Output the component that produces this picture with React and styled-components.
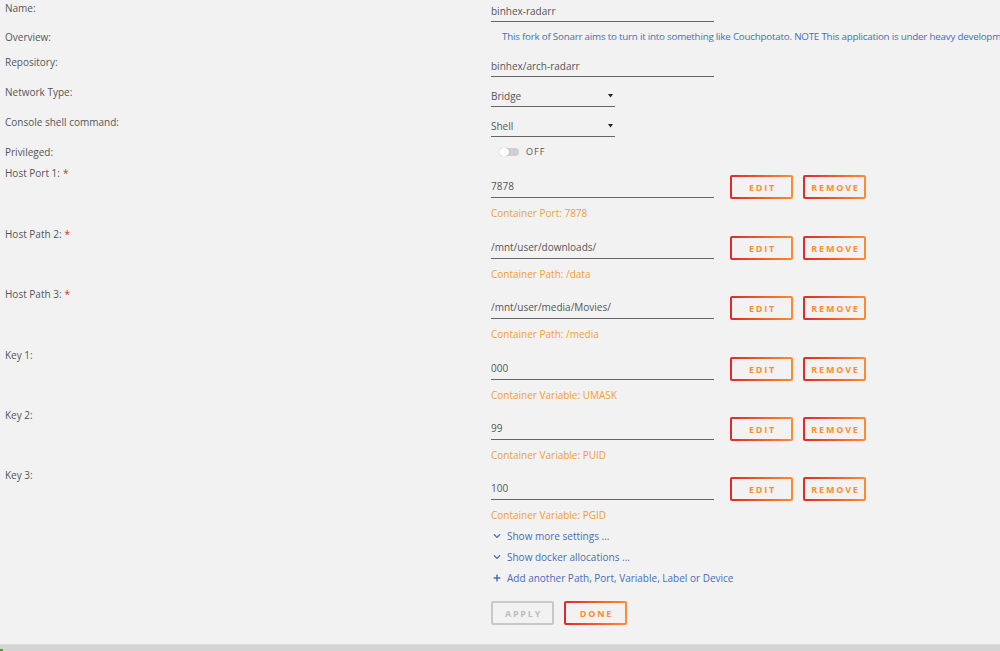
import React from 'react';
import styled, { createGlobalStyle } from 'styled-components';
import { FaChevronDown, FaPlus } from 'react-icons/fa';

const Global = createGlobalStyle`
  html, body { margin: 0; padding: 0; background: #f2f2f2; }
  body {
    font-family: "Open Sans", "DejaVu Sans", sans-serif;
    font-size: 10px;
    color: #555;
    overflow: hidden;
  }
  * { box-sizing: border-box; }
`;

const Page = styled.div`
  height: 651px;
  display: flex;
  flex-direction: column;
`;

const Form = styled.div`
  display: flex;
  flex-direction: column;
`;

const Row = styled.div`
  display: grid;
  grid-template-columns: 486px 1fr;
  padding-left: 5px;
  height: ${(p) => p.$h}px;
`;

const Label = styled.div`
  line-height: 16px;
  white-space: nowrap;
`;

const Req = styled.span`
  color: #e22828;
  margin-left: 3px;
`;

const Field = styled.div`
  margin-top: ${(p) => p.$mt || 0}px;
  display: flex;
  flex-direction: column;
  min-width: 0;
`;

const Input = styled.input`
  width: 223px;
  height: ${(p) => p.$h || 22}px;
  border: none;
  border-bottom: 1px solid #666;
  background: transparent;
  font: inherit;
  color: #555;
  padding: 0;
  outline: none;
`;

const Select = styled.div`
  width: 124px;
  height: 22px;
  border-bottom: 1px solid #666;
  display: flex;
  align-items: center;
  justify-content: space-between;
  padding-right: 2px;
`;

const Caret = styled.svg`
  width: 5px;
  height: 5px;
  fill: #222;
`;

const Description = styled.div`
  line-height: 16px;
  color: #486dba;
  margin-left: 11px;
  white-space: nowrap;
  font-size: 9.8px;
  letter-spacing: -0.22px;
`;

const ToggleWrap = styled.div`
  display: flex;
  align-items: center;
  height: 15px;
  margin-left: 8px;
  gap: 7px;
`;

const Track = styled.div`
  width: 20px;
  height: 8px;
  border-radius: 4px;
  background: #cfcfcf;
  position: relative;
`;

const Knob = styled.div`
  position: absolute;
  left: 0;
  top: 0;
  width: 10px;
  height: 8px;
  border-radius: 4px;
  background: #fff;
  box-shadow: 0 0 1px rgba(0, 0, 0, 0.35);
`;

const ToggleText = styled.span`
  font-size: 9px;
  letter-spacing: 1px;
  color: #555;
`;

const InputRow = styled.div`
  display: flex;
  align-items: flex-start;
  gap: 10px;
`;

const Buttons = styled.div`
  display: flex;
  gap: 10px;
  margin-left: 6px;
`;

const Button = styled.button`
  width: 63px;
  height: 24px;
  border: 2px solid transparent;
  border-radius: 2px;
  background: ${(p) =>
    p.$disabled
      ? 'linear-gradient(#f2f2f2,#f2f2f2) padding-box, linear-gradient(#c8c8c8,#c8c8c8) border-box'
      : 'linear-gradient(#f2f2f2,#f2f2f2) padding-box, linear-gradient(90deg,#e22828,#ff8c2f) border-box'};
  color: ${(p) => (p.$disabled ? '#bdbdbd' : '#ff8c2f')};
  font-family: inherit;
  font-weight: 700;
  font-size: 9px;
  letter-spacing: 1.8px;
  text-transform: uppercase;
  padding: 0 0 0 2px;
  cursor: pointer;
`;

const Helper = styled.div`
  margin-top: 6px;
  line-height: 16px;
  color: #f0a030;
`;

const Links = styled.div`
  display: flex;
  flex-direction: column;
`;

const LinkItem = styled.div`
  height: 21px;
  display: flex;
  align-items: center;
  gap: 6px;
  color: #486dba;
  margin-left: 2px;
  svg { width: 8px; height: 8px; }
`;

const Actions = styled.div`
  margin-top: 13px;
  display: flex;
  gap: 10px;
`;

const Footer = styled.div`
  margin-top: auto;
  height: 7px;
  background: #d4d4d4;
  border-top: 1px solid #dcdcdc;
  position: relative;
`;

const FooterMark = styled.div`
  position: absolute;
  left: 0;
  bottom: 0;
  width: 3px;
  height: 2px;
  background: #5a9a2a;
`;

const hostRows = [
  { label: 'Host Port 1:', req: true, value: '7878', help: 'Container Port: 7878', h: 61 },
  { label: 'Host Path 2:', req: true, value: '/mnt/user/downloads/', help: 'Container Path: /data', h: 60 },
  { label: 'Host Path 3:', req: true, value: '/mnt/user/media/Movies/', help: 'Container Path: /media', h: 61 },
  { label: 'Key 1:', value: '000', help: 'Container Variable: UMASK', h: 60 },
  { label: 'Key 2:', value: '99', help: 'Container Variable: PUID', h: 60 },
  { label: 'Key 3:', value: '100', help: 'Container Variable: PGID', h: 58 },
];

function SelectField({ value }) {
  return (
    <Select>
      <span>{value}</span>
      <Caret viewBox="0 0 10 10"><path d="M0 2h10L5 9z" /></Caret>
    </Select>
  );
}

export default function App() {
  return (
    <Page>
      <Global />
      <Form>
        <Row $h={29}>
          <Label>Name:</Label>
          <Field><Input readOnly value="binhex-radarr" /></Field>
        </Row>
        <Row $h={25}>
          <Label>Overview:</Label>
          <Description>
            This fork of Sonarr aims to turn it into something like Couchpotato. NOTE This application is under heavy developm
          </Description>
        </Row>
        <Row $h={30}>
          <Label>Repository:</Label>
          <Field $mt={1}><Input readOnly value="binhex/arch-radarr" /></Field>
        </Row>
        <Row $h={30}>
          <Label>Network Type:</Label>
          <Field $mt={1}><SelectField value="Bridge" /></Field>
        </Row>
        <Row $h={30}>
          <Label>Console shell command:</Label>
          <Field $mt={1}><SelectField value="Shell" /></Field>
        </Row>
        <Row $h={21}>
          <Label>Privileged:</Label>
          <ToggleWrap>
            <Track><Knob /></Track>
            <ToggleText>OFF</ToggleText>
          </ToggleWrap>
        </Row>
        {hostRows.map((r) => (
          <Row key={r.label} $h={r.h}>
            <Label>
              {r.label}
              {r.req && <Req>*</Req>}
            </Label>
            <Field $mt={10}>
              <InputRow>
                <Input readOnly value={r.value} $h={23} />
                <Buttons>
                  <Button>Edit</Button>
                  <Button>Remove</Button>
                </Buttons>
              </InputRow>
              <Helper>{r.help}</Helper>
            </Field>
          </Row>
        ))}
        <Row $h={112}>
          <span />
          <Field>
            <Links>
              <LinkItem><FaChevronDown />Show more settings ...</LinkItem>
              <LinkItem><FaChevronDown />Show docker allocations ...</LinkItem>
              <LinkItem><FaPlus />Add another Path, Port, Variable, Label or Device</LinkItem>
            </Links>
            <Actions>
              <Button $disabled>Apply</Button>
              <Button>Done</Button>
            </Actions>
          </Field>
        </Row>
      </Form>
      <Footer><FooterMark /></Footer>
    </Page>
  );
}
